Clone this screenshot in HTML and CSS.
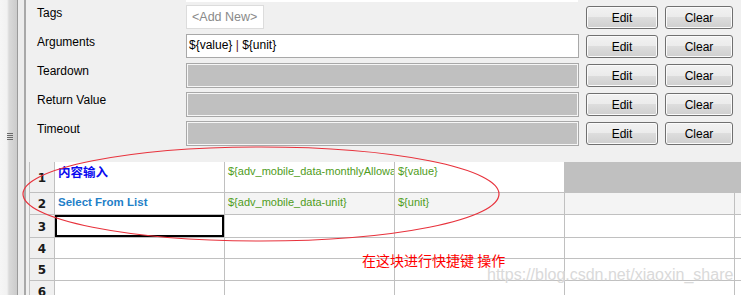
FILE: index.html
```html
<!DOCTYPE html>
<html lang="zh">
<head>
  <meta charset="UTF-8" />
  <title>Keyword Editor</title>
  <link rel="stylesheet" href="styles.css">
</head>
<body>
<div class="app">
  <!-- Sol ayırıcı -->
  <div class="sash">
    <div class="sash-grip">
      <svg class="grip-icon" width="7" height="8" viewBox="0 0 7 8">
        <path d="M0 0.5h6M0 2.5h6M0 4.5h6M0 6.5h6" stroke="#6a6a6a" stroke-width="1" />
      </svg>
    </div>
    <div class="sash-gap"></div>
  </div>

  <div class="main">
    <div class="doc-edge"></div>

    <!-- Ayarlar -->
    <div class="settings">
      <div class="setting-row">
        <div class="setting-label">Tags</div>
        <div class="setting-value"><span class="tag-new">&lt;Add New&gt;</span></div>
        <button class="btn btn-edit">Edit</button>
        <button class="btn btn-clear">Clear</button>
      </div>
      <div class="setting-row">
        <div class="setting-label">Arguments</div>
        <div class="setting-value"><div class="field field-text">${value} <span class="pipe">|</span> ${unit}</div></div>
        <button class="btn btn-edit">Edit</button>
        <button class="btn btn-clear">Clear</button>
      </div>
      <div class="setting-row">
        <div class="setting-label">Teardown</div>
        <div class="setting-value"><div class="field field-empty"></div></div>
        <button class="btn btn-edit">Edit</button>
        <button class="btn btn-clear">Clear</button>
      </div>
      <div class="setting-row">
        <div class="setting-label">Return Value</div>
        <div class="setting-value"><div class="field field-empty"></div></div>
        <button class="btn btn-edit">Edit</button>
        <button class="btn btn-clear">Clear</button>
      </div>
      <div class="setting-row">
        <div class="setting-label">Timeout</div>
        <div class="setting-value"><div class="field field-empty"></div></div>
        <button class="btn btn-edit">Edit</button>
        <button class="btn btn-clear">Clear</button>
      </div>
    </div>

    <!-- Adım tablosu -->
    <div class="grid">
      <div class="cell row-head">1</div>
      <div class="cell"><span class="kw-cn">内容输入</span></div>
      <div class="cell var">${adv_mobile_data-monthlyAllowance}</div>
      <div class="cell var">${value}</div>
      <div class="cell cell-off"></div>
      <div class="cell cell-off"></div>

      <div class="cell row-head">2</div>
      <div class="cell"><span class="kw">Select From List</span></div>
      <div class="cell cell-opt var">${adv_mobile_data-unit}</div>
      <div class="cell cell-opt var">${unit}</div>
      <div class="cell cell-opt"></div>
      <div class="cell cell-opt"></div>

      <div class="cell row-head">3</div>
      <div class="cell cell-selected"></div>
      <div class="cell"></div>
      <div class="cell"></div>
      <div class="cell"></div>
      <div class="cell"></div>

      <div class="cell row-head">4</div>
      <div class="cell"></div>
      <div class="cell"></div>
      <div class="cell"></div>
      <div class="cell"></div>
      <div class="cell"></div>

      <div class="cell row-head">5</div>
      <div class="cell"></div>
      <div class="cell"></div>
      <div class="cell"></div>
      <div class="cell"></div>
      <div class="cell"></div>

      <div class="cell row-head">6</div>
      <div class="cell"></div>
      <div class="cell"></div>
      <div class="cell"></div>
      <div class="cell"></div>
      <div class="cell"></div>
    </div>
  </div>

  <!-- Kırmızı not -->
  <svg class="mark" width="741" height="295" viewBox="0 0 741 295">
    <ellipse cx="261" cy="194" rx="238" ry="47" fill="none" stroke="#e8323c" stroke-width="1.2" />
  </svg>
  <div class="note">在这块进行快捷键 操作</div>
  <div class="watermark">https://blog.csdn.net/xiaoxin_share</div>
</div>
</body>
</html>
```

FILE: styles.css
```css
/* Genel */
body {
  margin: 0;
  background: #f0f0f0;
  font-family: "Liberation Sans", Arial, "Noto Sans CJK SC", sans-serif;
  font-size: 12px;
  color: #000;
}

.app {
  position: relative;
  display: flex;
  width: 741px;
  height: 295px;
  overflow: hidden;
}

/* Sol ayırıcı */
.sash {
  display: flex;
  flex: 0 0 26px;
}

.sash-grip {
  width: 17px;
  background: linear-gradient(to right, #f6f6f6 0, #f2f2f2 7px, #dadada 9px, #cbcbcb 17px);
  border-right: 1px solid #9a9a9a;
  display: flex;
  justify-content: center;
}

.grip-icon {
  margin-top: 133px;
  margin-left: 3px;
}

.sash-gap {
  width: 6px;
  background: #ececec;
  border-right: 2px solid #a8a8a8;
}

.main {
  flex: 1;
  min-width: 0;
}

.doc-edge {
  margin-left: 160px;
  width: 392px;
  height: 2px;
  background: #fff;
}

/* Ayar satırları */
.setting-row {
  display: flex;
  height: 29px;
}

.setting-label {
  width: 149px;
  padding: 4px 0 0 11px;
  line-height: 14px;
}

.setting-value {
  width: 393px;
  padding-top: 3px;
}

.tag-new {
  display: inline-block;
  width: 78px;
  height: 24px;
  box-sizing: border-box;
  background: #fff;
  border: 1px solid #dcdcdc;
  color: #8a8a8a;
  font-size: 12.5px;
  line-height: 22px;
  padding-left: 5px;
}

.field {
  height: 25px;
  box-sizing: border-box;
  border: 1px solid #a8a8a8;
}

.field-text {
  height: 24px;
  background: #fff;
  padding-left: 2px;
  line-height: 20px;
}

.pipe {
  color: #5a1020;
}

.field-empty {
  background: #c0c0c0;
  box-shadow: inset 0 0 0 1px #f6f6f6;
}

/* Butonlar */
.btn {
  height: 23px;
  margin-top: 4px;
  margin-left: 7px;
  padding: 0;
  border: 1px solid #707070;
  border-radius: 3px;
  background: linear-gradient(#f2f2f2 0%, #ebebeb 50%, #dddddd 50%, #cfcfcf 100%);
  box-shadow: inset 0 0 0 1px #fbfbfb;
  font-family: inherit;
  font-size: 12px;
  color: #000;
}

.btn-edit {
  width: 72px;
}

.btn-clear {
  width: 68px;
}

/* Tablo */
.grid {
  display: grid;
  grid-template-columns: 25px repeat(5, 170px);
  grid-template-rows: 31px 22px 23px 21px 22px 22px;
  margin: 15px 0 0 3px;
  width: 875px;
  background: #fff;
  border-left: 1px solid #c0c0c0;
  font-size: 11px;
}

.cell {
  box-sizing: border-box;
  border-right: 1px solid #c0c0c0;
  border-bottom: 1px solid #c0c0c0;
  padding: 3px 0 0 3px;
  line-height: 13px;
  white-space: nowrap;
  overflow: hidden;
}

.row-head {
  display: flex;
  align-items: center;
  justify-content: center;
  padding: 2px 0 0 0;
  background: #f0f0f0;
  font-family: "DejaVu Sans", sans-serif;
  font-weight: bold;
  font-size: 12px;
  color: #1a1a1a;
}

.cell-off {
  background: #c0c0c0;
  border-right-color: #c0c0c0;
}

.cell-opt {
  background: #f4f4f4;
}

.cell-selected {
  box-shadow: inset 0 0 0 2px #000;
}

.kw-cn {
  font-family: "Noto Sans CJK SC", sans-serif;
  font-weight: bold;
  font-size: 12.5px;
  color: #0a0af0;
  line-height: 13px;
}

.kw {
  font-weight: bold;
  font-size: 11.5px;
  color: #1f80c8;
}

.var {
  color: #4f9c22;
}

/* Not katmanı */
.mark {
  position: absolute;
  left: 0;
  top: 0;
  pointer-events: none;
}

.note {
  position: absolute;
  left: 362px;
  top: 252px;
  font-family: "Noto Sans CJK SC", sans-serif;
  font-size: 14px;
  line-height: 16px;
  color: #ff0000;
}

.watermark {
  position: absolute;
  left: 487px;
  top: 266px;
  font-size: 16px;
  line-height: 18px;
  color: #d6d6d6;
  text-shadow: 0 0 1px #fff;
  opacity: 0.9;
}
```
